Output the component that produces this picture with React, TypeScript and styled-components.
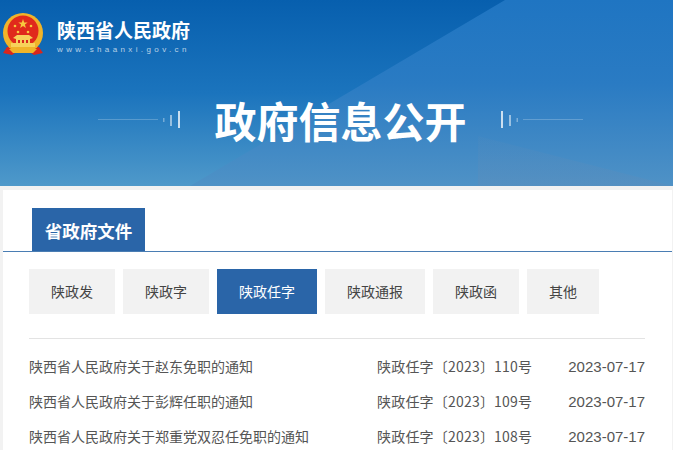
import React from 'react';
import styled, { createGlobalStyle } from 'styled-components';

const categories = ['陕政发', '陕政字', '陕政任字', '陕政通报', '陕政函', '其他'];

const docs = [
    { title: '陕西省人民政府关于赵东免职的通知', code: '陕政任字〔2023〕110号', date: '2023-07-17' },
    { title: '陕西省人民政府关于彭辉任职的通知', code: '陕政任字〔2023〕109号', date: '2023-07-17' },
    { title: '陕西省人民政府关于郑重党双忍任免职的通知', code: '陕政任字〔2023〕108号', date: '2023-07-17' },
];

const Emblem = () => (
    <svg width="46" height="46" viewBox="0 0 46 46">
        <path d="M7 36 L3 42 L12 44 L18 40 L28 40 L34 44 L43 42 L39 36 Z" fill="#d9261c" />
        <circle cx="23" cy="22" r="20" fill="#f0b429" />
        <circle cx="23" cy="20" r="15.5" fill="#e02a1c" />
        <path d="M23 8l1.2 3.4h3.5l-2.8 2.1 1 3.4-2.9-2-2.9 2 1-3.4-2.8-2.1h3.5z" fill="#f7c93e" />
        <circle cx="15" cy="15" r="1.3" fill="#f7c93e" />
        <circle cx="31" cy="15" r="1.3" fill="#f7c93e" />
        <circle cx="18" cy="21" r="1.3" fill="#f7c93e" />
        <circle cx="28" cy="21" r="1.3" fill="#f7c93e" />
        <path d="M13 27 L17 24 H29 L33 27 L30 28 V32 H35 V36 H11 V32 H16 V28 Z" fill="#f7d25a" />
        <path d="M18 29h2v3h-2zM22 29h2v3h-2zM26 29h2v3h-2z" fill="#d9261c" />
        <path d="M9 38 H37 L33 42 H13 Z" fill="#f0b429" />
    </svg>
);

const Flourish = ({ flip }: { flip?: boolean }) => (
    <svg width="82" height="20" viewBox="0 0 82 20" style={flip ? { transform: 'scaleX(-1)' } : undefined}>
        <rect x="0" y="9" width="60" height="1" fill="#fff" opacity="0.22" />
        <rect x="65" y="8" width="1.5" height="4" fill="#fff" opacity="0.35" />
        <rect x="72" y="5" width="2" height="11" fill="#fff" opacity="0.5" />
        <rect x="80" y="1" width="2" height="17" fill="#fff" opacity="0.75" />
    </svg>
);

const App = () => (
    <>
        <GlobalStyle />
        <Banner>
            <Brand>
                <Emblem />
                <BrandText>
                    <BrandName>陕西省人民政府</BrandName>
                    <BrandUrl>www.shaanxi.gov.cn</BrandUrl>
                </BrandText>
            </Brand>
            <Headline>
                <Flourish />
                <HeadlineText>政府信息公开</HeadlineText>
                <Flourish flip />
            </Headline>
        </Banner>
        <Page>
            <Card>
                <TabBar>
                    <Tab>省政府文件</Tab>
                </TabBar>
                <Categories>
                    {categories.map(name => (
                        <Category key={name} active={name === '陕政任字'} wide={name.length === 4} narrow={name.length === 2}>
                            {name}
                        </Category>
                    ))}
                </Categories>
                <DocList>
                    {docs.map(doc => (
                        <DocRow key={doc.code}>
                            <DocTitle>{doc.title}</DocTitle>
                            <DocCode>{doc.code}</DocCode>
                            <DocDate>{doc.date}</DocDate>
                        </DocRow>
                    ))}
                </DocList>
            </Card>
        </Page>
    </>
);

const GlobalStyle = createGlobalStyle`
    html, body {
        margin: 0;
        padding: 0;
        height: 450px;
        overflow: hidden;
        background: #f2f2f2;
        font-family: 'Liberation Sans', 'Noto Sans CJK SC', sans-serif;
    }
`;

const Banner = styled.header`
    position: relative;
    height: 186px;
    overflow: hidden;
    background: linear-gradient(180deg, #1f75c2 0%, #2a7bc3 45%, #4f92c6 100%);

    &::before {
        content: '';
        position: absolute;
        inset: 0;
        background: linear-gradient(180deg, #075fae 0%, #1b74bd 50%, #4f99ca 100%);
        clip-path: polygon(0 0, 505px 0, 190px 186px, 0 186px);
    }

    &::after {
        content: '';
        position: absolute;
        inset: 0;
        background: linear-gradient(180deg, rgba(90, 140, 190, 0) 60%, rgba(95, 140, 185, 0.35) 100%);
        clip-path: polygon(478px 136px, 673px 186px, 478px 186px);
    }
`;

const Brand = styled.div`
    position: relative;
    z-index: 1;
    display: flex;
    align-items: center;
    gap: 11px;
    padding-top: 11px;
`;

const BrandText = styled.div`
    display: flex;
    flex-direction: column;
    margin-top: 3px;
`;

const BrandName = styled.div`
    font-family: 'Noto Sans CJK SC', sans-serif;
    font-size: 19px;
    font-weight: 700;
    line-height: 26px;
    color: #fff;
`;

const BrandUrl = styled.div`
    margin-top: 1px;
    font-family: 'Liberation Sans', sans-serif;
    font-size: 8px;
    line-height: 11px;
    letter-spacing: 3.38px;
    color: rgba(255, 255, 255, 0.7);
    white-space: nowrap;
`;

const Headline = styled.div`
    position: relative;
    z-index: 1;
    display: flex;
    justify-content: center;
    align-items: center;
    gap: 34px;
    margin-top: 33px;
    padding-left: 8px;
`;

const HeadlineText = styled.h1`
    margin: 0;
    font-family: 'Noto Sans CJK SC', sans-serif;
    font-size: 42px;
    font-weight: 700;
    line-height: 60px;
    color: #fff;
`;

const Page = styled.main`
    padding: 4px 1px 0 3px;
`;

const Card = styled.section`
    height: 260px;
    background: #fff;
`;

const TabBar = styled.div`
    display: flex;
    height: 43px;
    padding: 18px 0 0 29px;
    border-bottom: 1px solid #4a7db3;
`;

const Tab = styled.div`
    width: 113px;
    height: 43px;
    font-family: 'Noto Sans CJK SC', sans-serif;
    font-size: 17.5px;
    font-weight: 700;
    line-height: 45px;
    text-align: center;
    color: #fff;
    background: #2a65a8;
`;

const Categories = styled.div`
    display: flex;
    gap: 8px;
    margin: 17px 27px 0 26px;
    padding-bottom: 24px;
    border-bottom: 1px solid #e3e3e3;
`;

const Category = styled.div<{ active: boolean; wide: boolean; narrow: boolean }>`
    width: ${p => (p.wide ? 100 : p.narrow ? 72 : 86)}px;
    height: 45px;
    font-family: 'Noto Sans CJK SC', sans-serif;
    font-size: 14px;
    line-height: 45px;
    text-align: center;
    color: ${p => (p.active ? '#fff' : '#444')};
    background: ${p => (p.active ? '#2a65a8' : '#f2f2f2')};
`;

const DocList = styled.div`
    display: flex;
    flex-direction: column;
    margin: 9px 27px 0 26px;
`;

const DocRow = styled.div`
    display: grid;
    grid-template-columns: 348px 1fr auto;
    height: 35px;
    align-items: center;
    font-family: 'Noto Sans CJK SC', sans-serif;
    font-size: 14px;
    color: #555;
`;

const DocTitle = styled.div`
    white-space: nowrap;
`;

const DocCode = styled.div`
    white-space: nowrap;
    letter-spacing: 0.2px;
`;

const DocDate = styled.div`
    margin-top: 1px;
    font-family: 'Liberation Sans', sans-serif;
    font-size: 15px;
`;

export default App;
